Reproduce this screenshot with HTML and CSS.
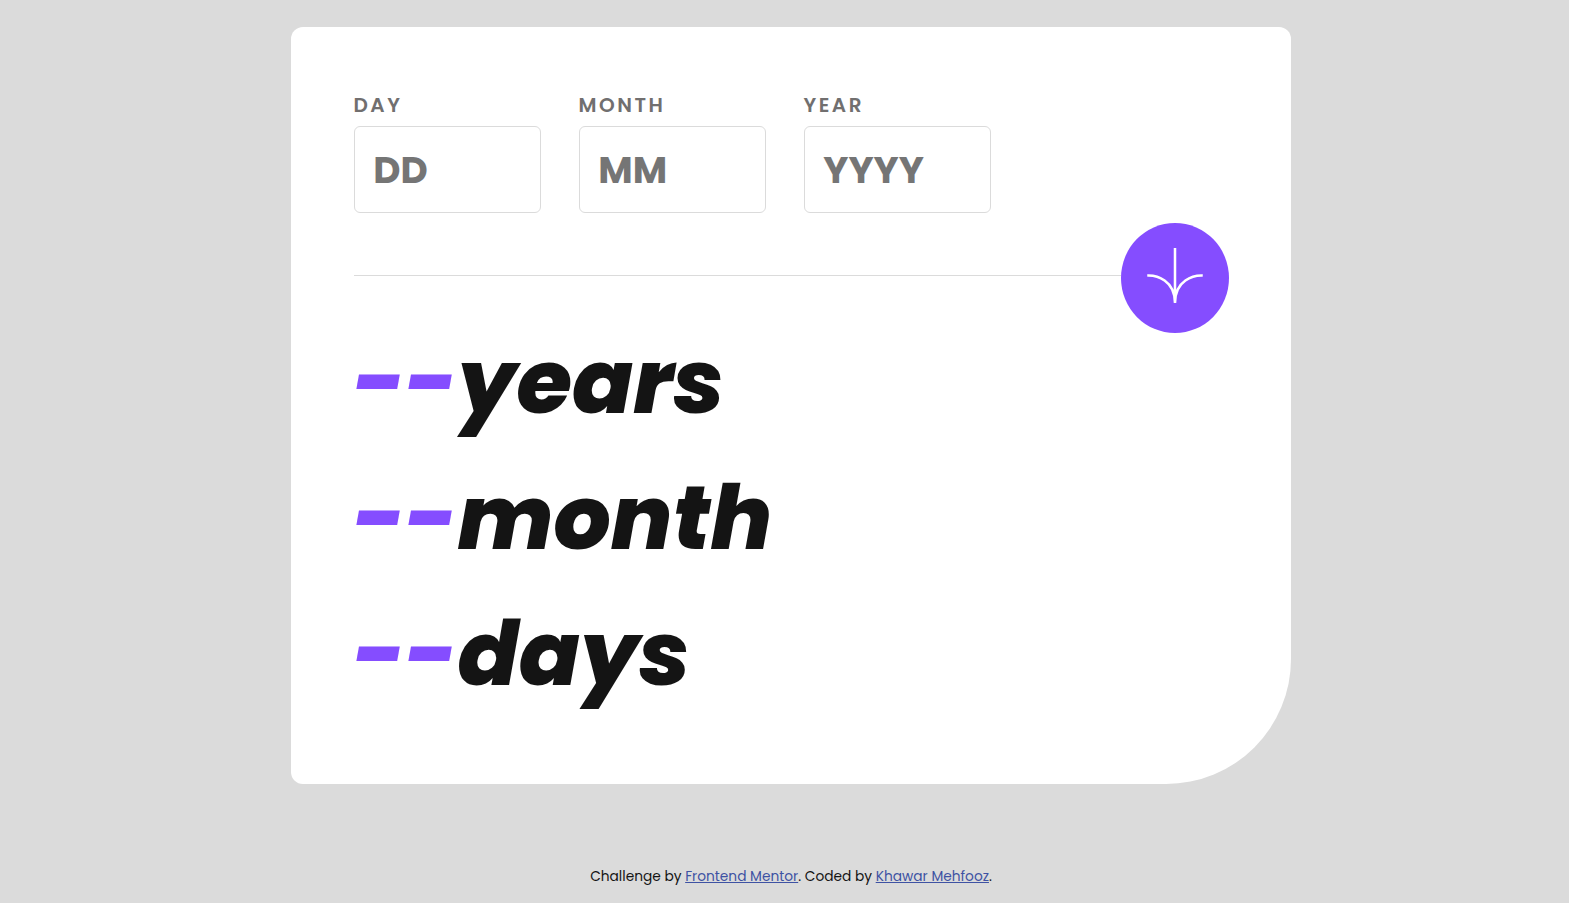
FILE: index.html
```html
<!DOCTYPE html>
<html lang="en">
<head>
<meta charset="utf-8">
<title>Age calculator</title>
<link rel="stylesheet" href="styles.css">
</head>
<body>
<main class="card">
  <form class="fields">
    <label class="field"><span class="label">DAY</span><input class="box" type="text" placeholder="DD"></label>
    <label class="field"><span class="label">MONTH</span><input class="box" type="text" placeholder="MM"></label>
    <label class="field"><span class="label">YEAR</span><input class="box" type="text" placeholder="YYYY"></label>
  </form>
  <div class="divider">
    <span class="line"></span>
    <button class="go" type="button" aria-label="Calculate"><svg width="58" height="55" viewBox="0 0 46 44" preserveAspectRatio="none"><g fill="none" stroke="#fff" stroke-width="2"><path d="M1 22.019C8.333 21.686 23 25.616 23 44M23 44V0M45 22.019C37.667 21.686 23 25.616 23 44"/></g></svg></button>
  </div>
  <section class="results">
    <p class="row"><span class="value">--</span>years</p>
    <p class="row"><span class="value">--</span>month</p>
    <p class="row"><span class="value">--</span>days</p>
  </section>
</main>
<footer class="credit">Challenge by <a href="#">Frontend Mentor</a>. Coded by <a href="#">Khawar Mehfooz</a>.</footer>
</body>
</html>
```
FILE: styles.css
```css
* { box-sizing: border-box; }
body { margin: 0; height: 903px; overflow: hidden; padding: 27px 0 0 291px; background: #dbdbdb; font-family: Poppins, Inter, sans-serif; }
.card { width: 1000px; height: 757px; padding: 63px 62px 0 62.5px; background: #fff; border-radius: 12px 12px 125px 12px; }
.fields { display: flex; gap: 37.5px; margin: 0; }
.field { display: block; width: 187.5px; }
.label { display: block; height: 36px; line-height: 31px; font-size: 20px; font-weight: 600; letter-spacing: 2.5px; color: #716f6f; }
.box { display: block; width: 100%; height: 87px; padding: 0 0 0 18.75px; border: 1px solid #dbdbdb; border-radius: 6px; background: #fff; font-family: inherit; font-size: 37.5px; font-weight: 700; outline: none; }
.box::placeholder { color: #757575; }
.divider { display: flex; align-items: center; height: 110px; margin-top: 10px; }
.line { flex: 1; height: 1px; margin-bottom: 5px; background: #dbdbdb; }
.go { display: flex; align-items: center; justify-content: center; width: 108px; height: 110px; padding: 0 0 5px; border: 0; border-radius: 50%; background: #854dff; }
.results { margin-top: -19px; }
.row { margin: 0; font-size: 90px; font-weight: 800; font-style: italic; color: #141414; }
.value { color: #854dff; }
.credit { width: 1000px; margin-top: 81px; text-align: center; font-size: 13.75px; line-height: 24px; color: #141414; }
.credit a { color: #3e52a3; }
```
